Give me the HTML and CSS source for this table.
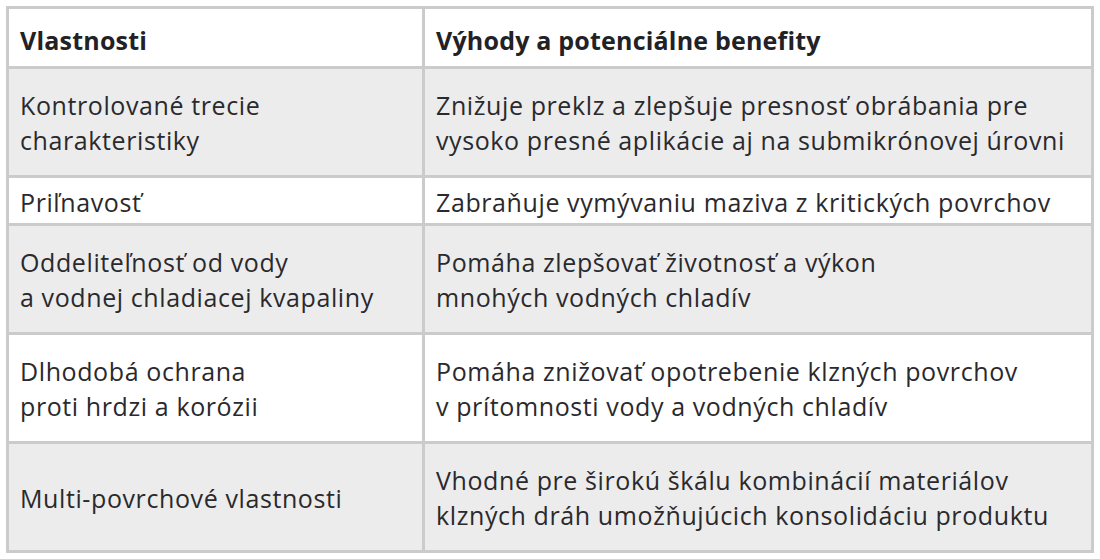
FILE: index.html
```html
<!DOCTYPE html>
<html lang="sk">
<head>
<meta charset="utf-8">
<title>Vlastnosti</title>
<link rel="stylesheet" href="styles.css">
</head>
<body>
<table class="tbl">
  <colgroup><col class="col1"><col class="col2"></colgroup>
  <thead>
    <tr class="head"><th>Vlastnosti</th><th>Výhody a potenciálne benefity</th></tr>
  </thead>
  <tbody>
    <tr class="gray tall"><td>Kontrolované trecie<br>charakteristiky</td><td>Znižuje preklz a zlepšuje presnosť obrábania pre<br>vysoko presné aplikácie aj na submikrónovej úrovni</td></tr>
    <tr class="white short"><td>Priľnavosť</td><td>Zabraňuje vymývaniu maziva z kritických povrchov</td></tr>
    <tr class="gray tall"><td>Oddeliteľnosť od vody<br>a vodnej chladiacej kvapaliny</td><td>Pomáha zlepšovať životnosť a výkon<br>mnohých vodných chladív</td></tr>
    <tr class="white tall"><td>Dlhodobá ochrana<br>proti hrdzi a korózii</td><td>Pomáha znižovať opotrebenie klzných povrchov<br>v prítomnosti vody a vodných chladív</td></tr>
    <tr class="gray tall last"><td>Multi-povrchové vlastnosti</td><td>Vhodné pre širokú škálu kombinácií materiálov<br>klzných dráh umožňujúcich konsolidáciu produktu</td></tr>
  </tbody>
</table>
</body>
</html>
```
FILE: styles.css
```css
html, body {
  margin: 0;
  padding: 0;
  background: #ffffff;
}
body {
  padding: 6px;
  font-family: "Open Sans", "Noto Sans", sans-serif;
  color: #2a292d;
}
.tbl {
  width: 1088px;
  table-layout: fixed;
  border-collapse: separate;
  border-spacing: 0;
  border: 3px solid #cbcbcb;
  font-size: 25px;
  line-height: 35px;
}
.col1 { width: 416px; }
.tbl th,
.tbl td {
  text-align: left;
  vertical-align: middle;
  padding: 0 8px 0 11px;
  border-bottom: 3px solid #cbcbcb;
  letter-spacing: 0.6px;
  white-space: nowrap;
}
.tbl th:first-child,
.tbl td:first-child {
  border-right: 3px solid #cbcbcb;
}
.tbl tr.last td { border-bottom: 0; }
.tbl th {
  font-weight: 700;
  letter-spacing: 0.2px;
  padding-top: 14px;
  padding-bottom: 8px;
  color: #222125;
}
.gray td { background: #ececec; }
.white td { background: #ffffff; }
.tall td { padding-top: 19px; padding-bottom: 17px; }
.short td { padding-top: 7px; padding-bottom: 3px; }
```
